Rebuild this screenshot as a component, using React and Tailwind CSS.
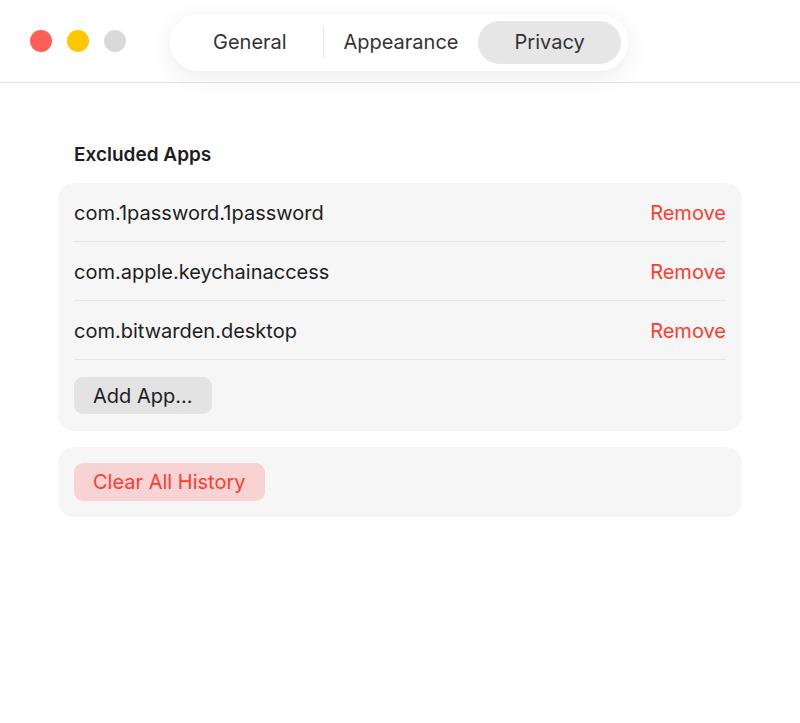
import React from 'react';

const apps = ['com.1password.1password', 'com.apple.keychainaccess', 'com.bitwarden.desktop'];

export default function App() {
  return (
    <div className="w-[800px] h-[723px] bg-white text-[#1d1d1f]" style={{ fontFamily: 'Inter, "Noto Sans", sans-serif' }}>
      <div className="h-[83px] border-b border-[#e3e3e3] flex items-center">
        <div className="flex items-center gap-[15px] pl-[30px] w-[170px]">
          <span className="w-[22px] h-[22px] rounded-full bg-[#fe5f57]" />
          <span className="w-[22px] h-[22px] rounded-full bg-[#fdc800]" />
          <span className="w-[22px] h-[22px] rounded-full bg-[#d9d9d9]" />
        </div>
        <div className="mt-[2px] h-[57px] w-[458px] rounded-[29px] bg-white shadow-[0_6px_24px_rgba(0,0,0,0.08)] flex items-center px-[7px] text-[20px] text-[#333]">
          <div className="w-[147px] text-center">General</div>
          <div className="w-px h-[32px] bg-[#e6e6e6]" />
          <div className="w-[156px] text-center">Appearance</div>
          <div className="w-[144px] h-[43px] rounded-[22px] bg-[#e6e6e6] flex items-center justify-center">Privacy</div>
        </div>
      </div>
      <div className="px-[58px] pt-[60px]">
        <div className="pl-[16px] text-[19px] font-semibold mb-[16px] leading-[24px]">Excluded Apps</div>
        <div className="rounded-[16px] bg-[#f6f6f6] px-[16px]">
          {apps.map((a) => (
            <div key={a} className="h-[59px] pt-[2px] flex items-center justify-between border-b border-[#e5e5e5] text-[20px]">
              <span>{a}</span>
              <span className="text-[#ff3b30]">Remove</span>
            </div>
          ))}
          <div className="py-[17px]">
            <button className="h-[37px] px-[19px] rounded-[9px] bg-[#e3e3e3] text-[20px]">Add App...</button>
          </div>
        </div>
        <div className="mt-[16px] rounded-[16px] bg-[#f6f6f6] px-[16px] py-[16px]">
          <button className="h-[38px] px-[19px] rounded-[9px] bg-[#f8d3d3] text-[20px] text-[#ff3b30]">Clear All History</button>
        </div>
      </div>
    </div>
  );
}
